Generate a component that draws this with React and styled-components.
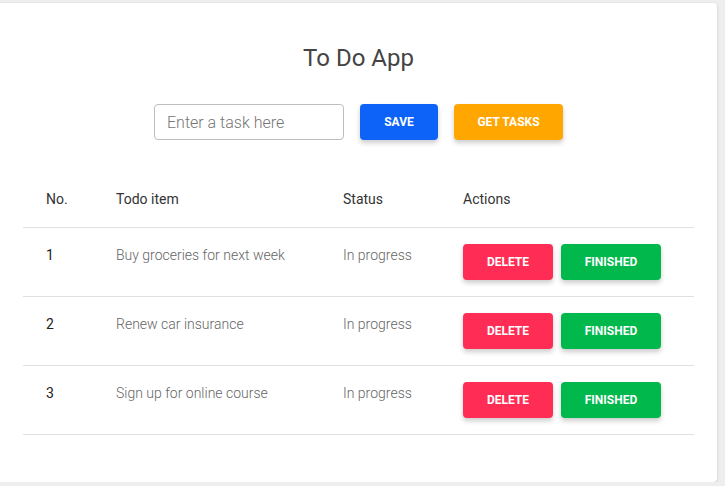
import styled, { createGlobalStyle } from "styled-components";

const GlobalStyle = createGlobalStyle`
  body {
    margin: 0;
    background: #eeeeee;
    font-family: Roboto, "Liberation Sans", sans-serif;
  }
`;

const Card = styled.div`
  margin-top: 3px;
  width: 717px;
  height: 479px;
  box-sizing: border-box;
  padding: 40px 23px 0;
  background: #ffffff;
  border-radius: 0 4px 4px 0;
  box-shadow: 0 1px 3px rgba(0, 0, 0, 0.18);
`;

const Title = styled.h1`
  margin: 0;
  font-size: 24px;
  line-height: 30px;
  font-weight: 400;
  color: #444444;
  text-align: center;
`;

const Form = styled.div`
  margin-top: 31px;
  display: flex;
  justify-content: center;
  gap: 16px;
`;

const Input = styled.input`
  width: 190px;
  height: 36px;
  box-sizing: border-box;
  padding: 0 12px;
  border: 1px solid #bdbdbd;
  border-radius: 4px;
  font-family: inherit;
  font-size: 16px;
  font-weight: 300;
  color: #333;
  outline: none;

  &::placeholder {
    color: #757575;
  }
`;

const Button = styled.button`
  width: ${(p) => p.$w}px;
  height: 36px;
  border: none;
  border-radius: 4px;
  background: ${(p) => p.$bg};
  color: #ffffff;
  font-family: inherit;
  font-size: 12px;
  font-weight: 700;
  text-transform: uppercase;
  box-shadow: 0 3px 5px rgba(0, 0, 0, 0.2);
  cursor: pointer;
`;

const Table = styled.div`
  margin-top: 32px;
`;

const Row = styled.div`
  box-sizing: border-box;
  display: grid;
  grid-template-columns: 70px 227px 120px 1fr;
  padding-left: 23px;
  border-bottom: 1px solid #e0e0e0;
  align-items: ${(p) => (p.$head ? "center" : "start")};
  height: ${(p) => (p.$head ? 56 : 69)}px;
  padding-top: ${(p) => (p.$head ? 0 : 16)}px;
  padding-bottom: ${(p) => (p.$head ? 2 : 0)}px;
`;

const HeadCell = styled.div`
  font-size: 14px;
  font-weight: 400;
  color: #333333;
  line-height: 22px;
`;

const Cell = styled.div`
  font-size: 14px;
  line-height: 22px;
  font-weight: ${(p) => (p.$strong ? 400 : 300)};
  color: ${(p) => (p.$strong ? "#222222" : "#666666")};
`;

const Actions = styled.div`
  display: flex;
  gap: 8px;
`;

const tasks = [
  { id: 1, text: "Buy groceries for next week", status: "In progress" },
  { id: 2, text: "Renew car insurance", status: "In progress" },
  { id: 3, text: "Sign up for online course", status: "In progress" },
];

export default function App() {
  return (
    <>
      <GlobalStyle />
      <Card>
        <Title>To Do App</Title>
        <Form>
          <Input placeholder="Enter a task here" />
          <Button $w={78} $bg="#0d63f8">Save</Button>
          <Button $w={109} $bg="#ffa600">Get Tasks</Button>
        </Form>
        <Table>
          <Row $head>
            <HeadCell>No.</HeadCell>
            <HeadCell>Todo item</HeadCell>
            <HeadCell>Status</HeadCell>
            <HeadCell>Actions</HeadCell>
          </Row>
          {tasks.map((t) => (
            <Row key={t.id}>
              <Cell $strong>{t.id}</Cell>
              <Cell>{t.text}</Cell>
              <Cell>{t.status}</Cell>
              <Actions>
                <Button $w={90} $bg="#ff2d55">Delete</Button>
                <Button $w={100} $bg="#00b84c">Finished</Button>
              </Actions>
            </Row>
          ))}
        </Table>
      </Card>
    </>
  );
}
